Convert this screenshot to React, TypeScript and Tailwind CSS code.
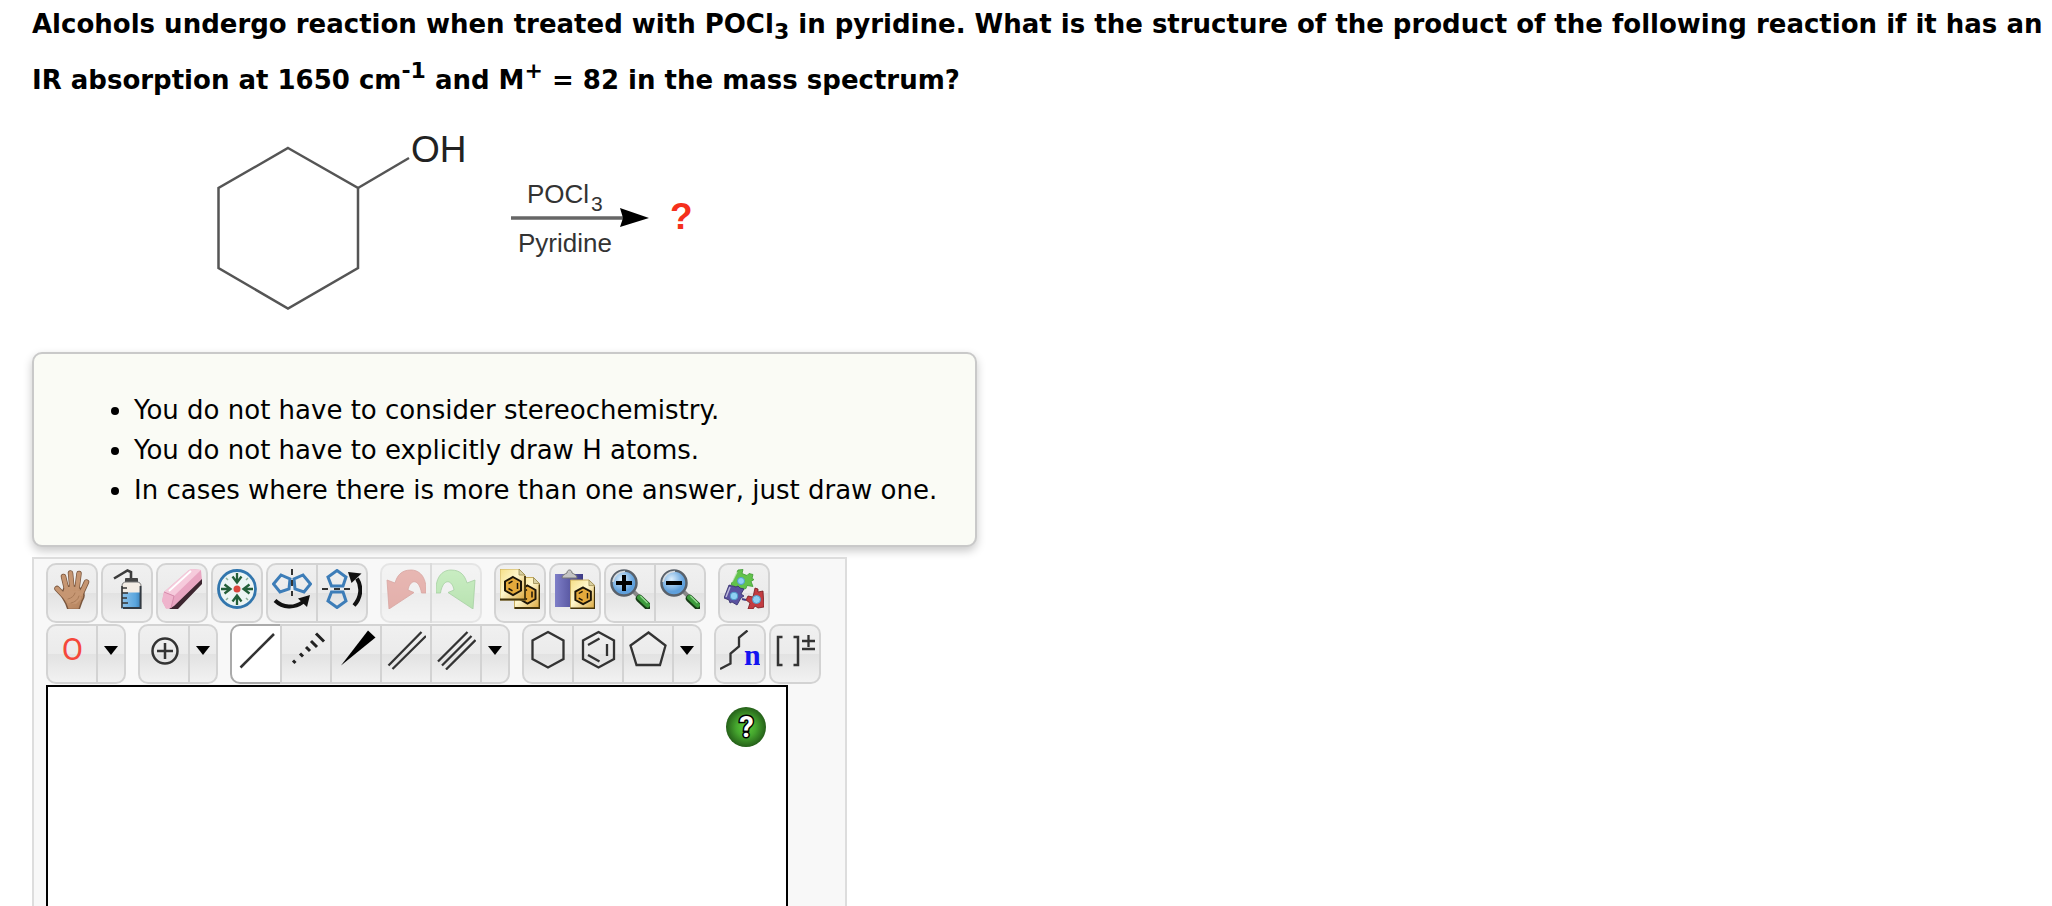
import React from "react";

interface ToolProps {
    label: string;
    active?: boolean;
    disabled?: boolean;
    children: React.ReactNode;
}

interface GroupProps {
    children: React.ReactNode;
}

const Icon: React.FC<GroupProps> = ({children}) => (
    <svg viewBox="0 0 40 40" className="block h-10 w-10 overflow-hidden" fill="none" stroke="#333" strokeWidth="2.300">{children}</svg>
);

const Tool: React.FC<ToolProps> = ({label, active, disabled, children}) => (
    <button
        aria-label={label}
        disabled={disabled}
        className={active
            ? "-ml-0.5 flex h-[60px] w-[52px] items-start justify-center border-2 border-[#aaa] bg-white pt-1 first:ml-0 first:rounded-l-[10px] last:rounded-r-[10px]"
            : "-ml-0.5 flex h-[60px] w-[52px] items-start justify-center border-2 border-[#d3d3d3] bg-[linear-gradient(#f0f0f0,#ebebeb_50%,#e2e2e2_50%,#f2f2f2)] pt-1 first:ml-0 first:rounded-l-[10px] last:rounded-r-[10px] disabled:opacity-50"}
    >
        <Icon>{children}</Icon>
    </button>
);

const Arrow: React.FC<{label: string}> = ({label}) => (
    <button aria-label={label} className="-ml-0.5 flex h-[60px] w-[30px] items-center justify-center rounded-r-[10px] border-2 border-[#d3d3d3] bg-[linear-gradient(#f0f0f0,#ebebeb_50%,#e2e2e2_50%,#f2f2f2)] pb-2">
        <svg viewBox="0 0 14 9" className="h-[9px] w-3.5"><path d="M0 0h14L7 9z"/></svg>
    </button>
);

const Group: React.FC<GroupProps> = ({children}) => <div className="flex">{children}</div>;

const Cluster: React.FC<GroupProps> = ({children}) => <div className="flex gap-[3px]">{children}</div>;

const Page: React.FC = () => (
    <>
        <path d="M0 0h19l6 6v25H0z" fill="url(#paper)" stroke="#c7ab5c" strokeWidth="1"/>
        <path d="M19 0v6h6z" fill="#d8cfa0" stroke="#9a8a50" strokeWidth=".8"/>
        <path d="M0 30.500h25V7" stroke="#43340c" strokeWidth="1.800"/>
        <path d="M13 8l8 4.500v9L13 26l-8-4.500v-9z" fill="#e5aa3c" stroke="#1c1508" strokeWidth="2"/>
        <path d="M8.500 14.500l4-2.300M8.500 19.500l4 2.300M17.500 14v6" stroke="#1c1508" strokeWidth="1.500"/>
    </>
);

const Lens: React.FC = () => (
    <>
        <path d="M24 23l5 5" stroke="#888" strokeWidth="4"/>
        <path d="M29.500 29.500l8 7.500" stroke="#173c17" strokeWidth="7.500" strokeLinecap="round"/>
        <path d="M29.500 28.500l8 7.500" stroke="#3d9b3d" strokeWidth="5" strokeLinecap="round"/>
        <path d="M30.500 27l7 7" stroke="#91d68d" strokeWidth="1.500"/>
        <circle cx="14" cy="14" r="12.500" fill="url(#lens)" stroke="#59616a" strokeWidth="2.500"/>
        <path d="M3 13A11.500 11.500 0 0 1 15 2.500" stroke="#d6dbe0" strokeWidth="1.500"/>
    </>
);

const Defs: React.FC = () => (
    <svg className="absolute h-0 w-0" aria-hidden="true">
        <defs>
            <linearGradient id="paper" x2="1" y2="1">
                <stop stopColor="#f6df86"/><stop offset=".45" stopColor="#fff7cd"/><stop offset="1" stopColor="#d9a63c"/>
            </linearGradient>
            <radialGradient id="lens" cx=".4" cy=".35">
                <stop stopColor="#dceefc"/><stop offset="1" stopColor="#5fa0dc"/>
            </radialGradient>
            <linearGradient id="skin" x2="1" y2="1">
                <stop stopColor="#cf9f79"/><stop offset="1" stopColor="#b3815c"/>
            </linearGradient>
            <linearGradient id="bottle">
                <stop stopColor="#8fc3ea"/><stop offset=".7" stopColor="#5ba6de"/><stop offset="1" stopColor="#3a80b8"/>
            </linearGradient>
            <linearGradient id="clip">
                <stop stopColor="#7f7fc8"/><stop offset="1" stopColor="#3c3a85"/>
            </linearGradient>
            <radialGradient id="help">
                <stop stopColor="#5dd03a"/><stop offset=".5" stopColor="#45a52e"/><stop offset="1" stopColor="#256019"/>
            </radialGradient>
            <linearGradient id="undo" x2="0" y2="1">
                <stop stopColor="#d9786f"/><stop offset="1" stopColor="#cf6a61"/>
            </linearGradient>
            <linearGradient id="redo" x2="0" y2="1">
                <stop stopColor="#9be38d"/><stop offset="1" stopColor="#7ccf6e"/>
            </linearGradient>
        </defs>
    </svg>
);

const Reaction: React.FC = () => (
    <svg viewBox="0 0 500 200" className="ml-[168px] block h-[200px] w-[500px]" fontFamily="'Liberation Sans', Arial, sans-serif" fill="#333">
        <g fill="none" stroke="#555" strokeWidth="2.500">
            <path d="M88 28l70 40v80l-70 40.500L18.500 148V68z"/>
            <path d="M158 68l51-30"/>
        </g>
        <text x="211" y="42" fontSize="37" fill="#222">OH</text>
        <text x="327" y="83" fontSize="26">POCl</text>
        <text x="391" y="91" fontSize="21">3</text>
        <path d="M311 98h112" stroke="#666" strokeWidth="3.500"/>
        <path d="M420 88l29 10-29 9 3-9z" fill="#000"/>
        <text x="318" y="132" fontSize="26">Pyridine</text>
        <text x="470" y="109" fontSize="37" fontWeight="bold" fill="#f5301c">?</text>
    </svg>
);

const Notes: React.FC = () => (
    <div className="w-fit rounded-[10px] border-2 border-[#c9c9c9] bg-[#fafbf5] pt-9 pr-[38px] pb-[35px] pl-[100px] shadow-[0_4px_10px_rgba(0,0,0,0.22)]">
        <ul className="list-disc text-[26px] leading-10">
            <li>You do not have to consider stereochemistry.</li>
            <li>You do not have to explicitly draw H atoms.</li>
            <li>In cases where there is more than one answer, just draw one.</li>
        </ul>
    </div>
);

const EditRow: React.FC = () => (
    <div className="flex gap-3">
        <Cluster>
            <Group>
                <Tool label="Move">
                    <g strokeLinecap="round" strokeLinejoin="round">
                        <g stroke="#7a563d" strokeWidth="5.500">
                            <path d="M14 29L5 19.500M15 22L11.500 7.500M20 20L18.500 4M25 20L27 4.500M29 25L34.500 13"/>
                        </g>
                        <path d="M12 19c4-3 12-3 16 0l3 4c2 3 1 6-1 9l-3 8.500H16L14 35 9 26z" fill="url(#skin)" stroke="#7a563d" strokeWidth="1.500"/>
                        <g stroke="#c69672" strokeWidth="4">
                            <path d="M14 29L5 19.500M15 22L11.500 7.500M20 20L18.500 4M25 20L27 4.500M29 25L34.500 13"/>
                        </g>
                        <path d="M12 22h16l1 8-5 5-8-1z" fill="#c69672" stroke="none"/>
                        <path d="M16 30c4-1 6-3 7-6M19 34c4-1 7-3 8-7" stroke="#a97a57" strokeWidth="1"/>
                    </g>
                </Tool>
            </Group>
            <Group>
                <Tool label="Clear">
                    <path d="M7 9.500L20.500 1.500 24 3v8" stroke="#3c3c3c" strokeWidth="2.600"/>
                    <path d="M18.500 13V9.500h12V13" fill="#444" stroke="#444" strokeWidth="1"/>
                    <path d="M15 17c0-3 2-4 4-4h11c3 0 4 2 4 4v23H15z" fill="#f3ece4" stroke="#777" strokeWidth="1"/>
                    <path d="M15 23.500h19V40H15z" fill="url(#bottle)" stroke="none"/>
                    <path d="M33.500 17v22H16" stroke="#333a42" strokeWidth="1.800"/>
                    <path d="M15 17v22M15 19h5M15 24h6M15 29h5M15 34h6" stroke="#333" strokeWidth="1.500"/>
                </Tool>
            </Group>
            <Group>
                <Tool label="Erase">
                    <g stroke="none">
                        <path d="M27 1l3-1 9 1 1 11-27 27-9 .500L0 32l2-9z" fill="#e9a6c2"/>
                        <path d="M27 1l3-1 9 1-27 26L2 23z" fill="#f6cbdc"/>
                        <path d="M2 23l10 4-3 12.500H4L0 32z" fill="#efb4cc"/>
                        <path d="M40 10v5L16 40H7l5-3z" fill="#3d2630"/>
                        <path d="M2 23l10 4M12 27L9 39" stroke="#d68cac" strokeWidth="1"/>
                        <path d="M7 22L29 2" stroke="#fff" strokeWidth="1.800"/>
                    </g>
                </Tool>
            </Group>
            <Group>
                <Tool label="Clean structure">
                    <circle cx="20" cy="20" r="18.500" fill="#edf5f4" stroke="#3276ad" strokeWidth="2.800"/>
                    <g stroke="#245f39" strokeWidth="2.300">
                        <path d="M20 4v10M15.500 7.500l4.500 6 4.500-6M20 36V26M15.500 32.500l4.500-6 4.500 6M4 20h10M7.500 15.500l6 4.500-6 4.500M36 20H26M32.500 15.500l-6 4.500 6 4.500"/>
                    </g>
                    <path d="M9 9l2 2M31 9l-2 2M9 31l2-2M31 31l-2-2" stroke="#8daf9a" strokeWidth="1.500"/>
                    <circle cx="20" cy="20" r="3.500" fill="#dc463d" stroke="none"/>
                </Tool>
            </Group>
            <Group>
                <Tool label="Flip horizontally">
                    <path d="M1.500 15L9 6l9 4-1 10-9 3zM38.500 15L31 6l-9 4 1 10 9 3z" stroke="#3d7db8" strokeWidth="3"/>
                    <path d="M20 0v6M20 11v6M20 22v5" stroke="#333" strokeWidth="2"/>
                    <path d="M3 31.500c8 7.500 19 8 28 1.500" stroke="#111" strokeWidth="4"/>
                    <path d="M38 26l-3 12-9-8.500z" fill="#111" stroke="none"/>
                </Tool>
                <Tool label="Flip vertically">
                    <path d="M15 1.500L24 8l-3 9H9.500L6 8zM15 38.500L24 32l-3-9H9.500L6 32z" stroke="#3d7db8" strokeWidth="3"/>
                    <path d="M0 20h6M12 20h6M22 20h6" stroke="#333" strokeWidth="2"/>
                    <path d="M32 36.500c7.500-8 8-19 3-27" stroke="#111" strokeWidth="4"/>
                    <path d="M26 3l13.500 1.500-10 9.500z" fill="#111" stroke="none"/>
                </Tool>
            </Group>
        </Cluster>
        <Group>
            <Tool label="Undo" disabled>
                <path d="M1 11l2 29 25-16.500-6-2.500c2-11 11-12 13.500 3H40C41 6 32 1 25 1 15 1 11 7 9 14z" fill="url(#undo)" stroke="#b9554d" strokeWidth=".8"/>
            </Tool>
            <Tool label="Redo" disabled>
                <path d="M39 11l-2 29-25-16.500 6-2.500C16 10 7 9 4.500 24H0C-1 6 8 1 15 1c10 0 14 6 16 13z" fill="url(#redo)" stroke="#58a850" strokeWidth=".8"/>
            </Tool>
        </Group>
        <Cluster>
            <Group>
                <Tool label="Copy">
                    <g transform="translate(14.500 8.500)"><Page/></g>
                    <Page/>
                </Tool>
            </Group>
            <Group>
                <Tool label="Paste">
                    <path d="M0 5h28v33H0z" fill="url(#clip)" stroke="none"/>
                    <path d="M7 9c0-3 3-4 5-5 0-4 5-4 5 0 2 1 5 2 5 5z" fill="#c4c4c4" stroke="#777" strokeWidth="1"/>
                    <g transform="translate(15.500 11) scale(.97 .93)"><Page/></g>
                </Tool>
            </Group>
            <Group>
                <Tool label="Zoom in">
                    <Lens/>
                    <path d="M14 6v16M6 14h16" stroke="#000" strokeWidth="4"/>
                </Tool>
                <Tool label="Zoom out">
                    <Lens/>
                    <path d="M6 14h16" stroke="#000" strokeWidth="4"/>
                </Tool>
            </Group>
        </Cluster>
        <Group>
            <Tool label="Templates">
                <g strokeWidth=".8" strokeLinejoin="round">
                    <path d="M14 1l5-.500-1 4 5 2 2-2 4 1-1 4 2 1-3 2 2 5-6-1-1 3-5 1-10-5z" fill="#62c34b" stroke="#3f9a33"/>
                    <path d="M5 16l7 2 2-1 2 2 4 1-3 5 3 2-3 2-4 7-5-3-2 1-1-3-5-2z" fill="#5a52a0" stroke="#322c68"/>
                    <path d="M31 19l3 1v3l5-1 1 16-6 1-3-2-2 3h-5l2-6-4-3 2-4 5 1z" fill="#c23c41" stroke="#75191e"/>
                    <path d="M18 30l4 1" stroke="#443d80" strokeWidth="2"/>
                </g>
                <g fill="#8fd0f4" stroke="#4f9cc9" strokeWidth="1">
                    <circle cx="17" cy="12" r="3.500"/>
                    <circle cx="10" cy="27" r="3.800"/>
                    <circle cx="32.500" cy="30.500" r="4"/>
                </g>
                <path d="M13 3L8 13M6 18L2 28" stroke="#fff" strokeOpacity=".6" strokeWidth="1.500"/>
            </Tool>
        </Group>
    </div>
);

const DrawRow: React.FC = () => (
    <div className="flex gap-3">
        <Group>
            <Tool label="Element">
                <text x="20.500" y="30" textAnchor="middle" fontFamily="Roboto, sans-serif" fontSize="31" fill="#f5483b" stroke="none">O</text>
            </Tool>
            <Arrow label="More elements"/>
        </Group>
        <Group>
            <Tool label="Charge">
                <circle cx="21" cy="21" r="12.500" strokeWidth="2.500"/>
                <path d="M21 13v16M13 21h16" strokeWidth="2.500"/>
            </Tool>
            <Arrow label="More charges"/>
        </Group>
        <Group>
            <Tool label="Single bond" active><path d="M4.500 37.500L38 4" strokeWidth="2.500"/></Tool>
            <Tool label="Hashed bond">
                <path d="M7 30.500l2.500 2.500M14 23.500l3 3M20 17l4 4M25 11l6 6M30 3.500l8 8" stroke="#222" strokeWidth="3"/>
            </Tool>
            <Tool label="Wedge bond"><path d="M5 35.500L32 .500l7.500 7z" fill="#000" stroke="none"/></Tool>
            <Tool label="Double bond"><path d="M2.500 35.500L35.500 2M6.500 39L40 6"/></Tool>
            <Tool label="Triple bond"><path d="M2 31.500L31.500 2M6 35.500L35.500 6M10 39.500L39.500 10"/></Tool>
            <Arrow label="More bonds"/>
        </Group>
        <Group>
            <Tool label="Cyclohexane"><path d="M20 2l15.500 8.500v18.500L20 37.500 4.500 29V10.500z"/></Tool>
            <Tool label="Benzene">
                <path d="M20.500 2L36 10.500v18.500l-15.500 8.500L5 29V10.500z"/>
                <path d="M10 15l11.500-6.500M29 14v12M10 25l11.500 6.500"/>
            </Tool>
            <Tool label="Cyclopentane"><path d="M20.500 2.500l17 13-5.500 19.500H8.500l-6-19.500z"/></Tool>
            <Arrow label="More rings"/>
        </Group>
        <Cluster>
            <Group>
                <Tool label="Chain">
                    <path d="M0 39l10.500-5.500v-10l8.500-7v-9l8.500-7"/>
                    <text x="24" y="35" fontFamily="'Liberation Serif', serif" fontSize="30" fontWeight="bold" fill="#1414f0" stroke="none">n</text>
                </Tool>
            </Group>
            <Group>
                <Tool label="Brackets">
                    <path d="M7.500 7H3v28h4.500M18.500 7H23v28h-4.500" strokeWidth="2.500"/>
                    <path d="M33.500 5v12M27 11h13M27 19h13"/>
                </Tool>
            </Group>
        </Cluster>
    </div>
);

const App: React.FC = () => {
    return(
        <main className="h-screen overflow-hidden bg-white pl-8 font-['DejaVu_Sans',Verdana,sans-serif] text-black">
            <Defs/>
            <h1 className="-mt-1 pb-3 text-[26px] leading-[56px] font-bold">
                Alcohols undergo reaction when treated with POCl<sub className="text-[22px]">3</sub> in pyridine. What is the structure of the product of the following reaction if it has an
                <br/>
                IR absorption at 1650 cm<sup className="text-[22px]">-1</sup> and M<sup className="text-[22px]">+</sup> = 82 in the mass spectrum?
            </h1>
            <Reaction/>
            <div className="pt-8 pb-2.5">
                <Notes/>
            </div>
            <section className="w-fit border-2 border-[#ddd] bg-[#f8f8f8] pt-1 pr-6 pl-3">
                <div className="flex flex-col gap-px">
                    <EditRow/>
                    <DrawRow/>
                </div>
                <div className="mt-px flex h-[600px] w-[742px] items-start justify-end border-2 border-black bg-white p-5">
                    <button aria-label="Help" className="rounded-full">
                        <svg viewBox="0 0 40 40" className="block h-10 w-10">
                            <circle cx="20" cy="20" r="20" fill="url(#help)"/>
                            <text x="20.500" y="29.500" textAnchor="middle" fontFamily="Roboto, sans-serif" fontSize="29" fontWeight="bold" fill="#fff" stroke="#000" strokeWidth="3" paintOrder="stroke">?</text>
                        </svg>
                    </button>
                </div>
            </section>
        </main>
    )
}

export default App;
